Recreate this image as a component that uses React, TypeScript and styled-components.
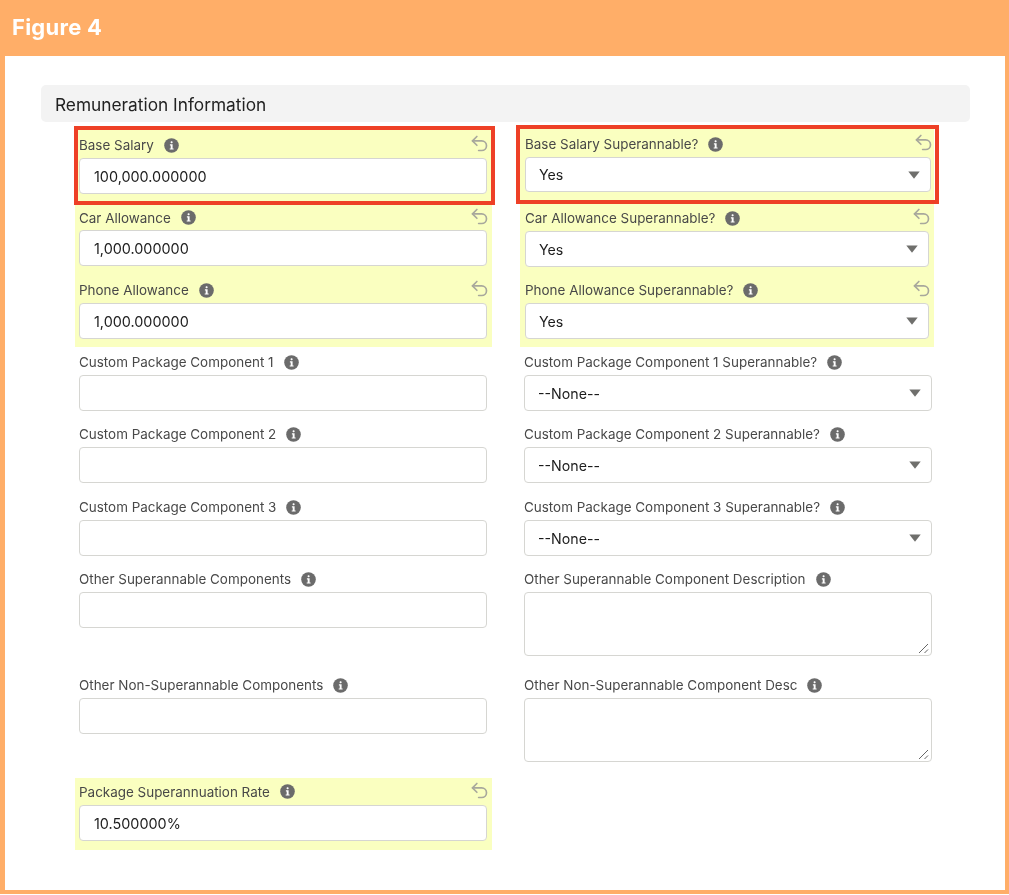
import React from "react";
import styled, { createGlobalStyle } from "styled-components";
import { Undo2 } from "lucide-react";

const Global = createGlobalStyle`
  html, body { margin: 0; padding: 0; background: #fff; }
  * { box-sizing: border-box; }
`;

const Frame = styled.div`
  width: 1009px;
  height: 894px;
  display: flex;
  flex-direction: column;
  background: #ffae68;
  padding: 0 4px 4px 5px;
  font-family: Inter, "Liberation Sans", sans-serif;
  filter: blur(0.35px);
`;

const Banner = styled.h1`
  margin: 0;
  height: 56px;
  padding: 15px 0 0 7px;
  font-size: 22px;
  line-height: 24px;
  font-weight: 700;
  letter-spacing: 0.25px;
  color: #fff;
`;

const Panel = styled.main`
  flex: 1;
  background: #fff;
  padding: 29px 35px 0 36px;
`;

const SectionTitle = styled.h2`
  margin: 0 0 6px;
  height: 37px;
  padding: 1px 0 0 14px;
  display: flex;
  align-items: center;
  background: #f3f3f3;
  border-radius: 5px;
  font-size: 17.3px;
  font-weight: 400;
  color: #222;
`;

const FieldGrid = styled.div`
  margin-left: 34px;
  display: grid;
  grid-template-columns: 417px 414px;
  grid-template-rows: 75px 72px 72px 72px 73px 72px 106px 108px 72px;
  column-gap: 28px;
`;

const Field = styled.div<{
  $changed?: boolean;
  $flag?: "left" | "right";
  $top: number;
  $left: number;
  $right: number;
}>`
  position: relative;
  z-index: ${(p) => (p.$flag ? 1 : 0)};
  align-self: start;
  height: 100%;
  padding: ${(p) => p.$top}px ${(p) => p.$right}px 0 ${(p) => p.$left}px;
  background: ${(p) => (p.$changed ? "#faffc0" : "transparent")};
  ${(p) =>
    p.$flag === "left"
      ? `&::after { content: ""; position: absolute; inset: -2px -3px -2px -1px; border: 4px solid #ee4026; pointer-events: none; }`
      : ""}
  ${(p) =>
    p.$flag === "right"
      ? `&::after { content: ""; position: absolute; inset: -3px -5px -1px -4px; border: 4px solid #ee4026; pointer-events: none; }`
      : ""}
`;

const LabelRow = styled.div<{ $height: number; $lift: number }>`
  height: ${(p) => p.$height}px;
  padding-top: ${(p) => p.$lift}px;
  display: flex;
  align-items: center;
  gap: 10px;
  font-size: 13.45px;
  color: #484848;
`;

const UndoMark = styled.span`
  margin-left: auto;
  margin-right: -3px;
  margin-top: -3px;
  display: flex;
  color: #a8a89c;
`;

const TextInput = styled.input<{ $height: number }>`
  display: block;
  width: 100%;
  height: ${(p) => p.$height}px;
  padding: 0 14px;
  border: 1px solid #d6d6d2;
  border-radius: 4px;
  background: #fff;
  font: 400 14.4px Inter, "Liberation Sans", sans-serif;
  color: #1c1c1c;
  outline: none;
`;

const SelectWrap = styled.div`
  position: relative;
`;

const SelectInput = styled.select<{ $height: number }>`
  display: block;
  width: 100%;
  height: ${(p) => p.$height}px;
  padding: 0 13px;
  border: 1px solid #d6d6d2;
  border-radius: 4px;
  background: #fff;
  appearance: none;
  font: 400 14.2px Inter, "Liberation Sans", sans-serif;
  color: #1c1c1c;
  outline: none;
`;

const Caret = styled.svg`
  position: absolute;
  right: 11px;
  top: 50%;
  margin-top: -4px;
`;

const AreaBox = styled.div`
  position: relative;
  height: 64px;
  border: 1px solid #d6d6d2;
  border-radius: 4px;
  background: #fff;
`;

const Grip = styled.svg`
  position: absolute;
  right: 2px;
  bottom: 1px;
`;

const InfoIcon = () => (
  <svg width="15" height="15" viewBox="0 0 15 15" aria-hidden="true">
    <circle cx="7.5" cy="7.5" r="7.3" fill="#6b6b6b" />
    <rect x="6.6" y="3.2" width="2" height="2" rx="0.8" fill="#fff" />
    <path d="M5.9 6.3h2.7v4.1h1v1.2H5.7v-1.2h1V7.5h-.8z" fill="#fff" />
  </svg>
);

type Kind = "input" | "select" | "area";

type Spec = {
  label: string;
  kind: Kind;
  value?: string;
  changed?: boolean;
  flag?: "left" | "right";
  top?: number;
  labelH?: number;
  lift?: number;
  ctrlH?: number;
  left?: number;
  right?: number;
};

const NONE = "--None--";

const fields: Spec[] = [
  { label: "Base Salary", kind: "input", value: "100,000.000000", changed: true, flag: "left", top: 2, right: 5 },
  { label: "Base Salary Superannable?", kind: "select", value: "Yes", changed: true, flag: "right", top: 1, ctrlH: 35, left: 5, right: 3 },
  { label: "Car Allowance", kind: "input", value: "1,000.000000", changed: true, labelH: 27, right: 5 },
  { label: "Car Allowance Superannable?", kind: "select", value: "Yes", changed: true, left: 5, right: 5 },
  { label: "Phone Allowance", kind: "input", value: "1,000.000000", changed: true, right: 5 },
  { label: "Phone Allowance Superannable?", kind: "select", value: "Yes", changed: true, left: 5, right: 5 },
  { label: "Custom Package Component 1", kind: "input", right: 5 },
  { label: "Custom Package Component 1 Superannable?", kind: "select", value: NONE, right: 2 },
  { label: "Custom Package Component 2", kind: "input", right: 5 },
  { label: "Custom Package Component 2 Superannable?", kind: "select", value: NONE, right: 2 },
  { label: "Custom Package Component 3", kind: "input", right: 5 },
  { label: "Custom Package Component 3 Superannable?", kind: "select", value: NONE, right: 2 },
  { label: "Other Superannable Components", kind: "input", right: 5 },
  { label: "Other Superannable Component Description", kind: "area", right: 2 },
  { label: "Other Non-Superannable Components", kind: "input", right: 5 },
  { label: "Other Non-Superannable Component Desc", kind: "area", right: 2 },
  { label: "Package Superannuation Rate", kind: "input", value: "10.500000%", changed: true, labelH: 27, lift: 0, right: 5 },
];

const Control = ({ spec }: { spec: Spec }) => {
  const h = spec.ctrlH ?? 36;
  if (spec.kind === "select") {
    return (
      <SelectWrap>
        <SelectInput $height={h} defaultValue={spec.value} aria-label={spec.label}>
          <option>{spec.value}</option>
        </SelectInput>
        <Caret width="12" height="8" viewBox="0 0 12 8" aria-hidden="true">
          <path d="M0.3 0.4h11.4L6 7.8z" fill="#6f6f6c" />
        </Caret>
      </SelectWrap>
    );
  }
  if (spec.kind === "area") {
    return (
      <AreaBox>
        <Grip width="11" height="11" viewBox="0 0 11 11" aria-hidden="true">
          <path d="M1 10L10 1M6.5 10L10 6.5" stroke="#666" strokeWidth="1" fill="none" />
        </Grip>
      </AreaBox>
    );
  }
  return <TextInput $height={h} defaultValue={spec.value ?? ""} aria-label={spec.label} />;
};

export default function App() {
  return (
    <>
      <Global />
      <Frame>
        <Banner>Figure 4</Banner>
        <Panel>
          <SectionTitle>Remuneration Information</SectionTitle>
          <FieldGrid>
            {fields.map((f) => (
              <Field
                key={f.label}
                $changed={f.changed}
                $flag={f.flag}
                $top={f.top ?? 0}
                $left={f.left ?? 4}
                $right={f.right ?? 5}
              >
                <LabelRow $height={f.labelH ?? 28} $lift={f.lift ?? 2}>
                  {f.label}
                  <InfoIcon />
                  {f.changed && (
                    <UndoMark>
                      <Undo2 size={21} strokeWidth={1.9} />
                    </UndoMark>
                  )}
                </LabelRow>
                <Control spec={f} />
              </Field>
            ))}
          </FieldGrid>
        </Panel>
      </Frame>
    </>
  );
}
